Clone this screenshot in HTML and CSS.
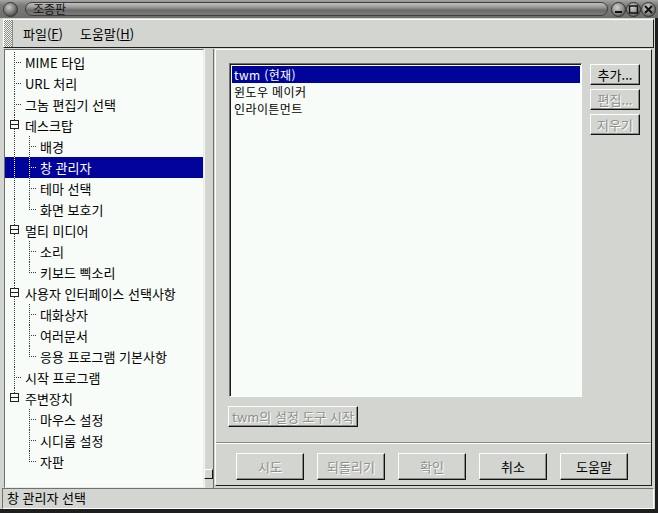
FILE: index.html
```html
<!DOCTYPE html>
<html lang="ko">
<head>
    <meta charset="UTF-8">
    <title>조종판</title>
    <link rel="stylesheet" href="styles.css">
</head>
<body>
    <div class="window">
        <div class="titlebar">
            <svg class="orb" width="15" height="15" viewBox="0 0 15 15">
                <defs>
                    <radialGradient id="orbFill" cx="0.4" cy="0.35" r="0.7">
                        <stop offset="0" stop-color="#c8c8c6"/>
                        <stop offset="0.6" stop-color="#7a7a78"/>
                        <stop offset="1" stop-color="#3c3c3a"/>
                    </radialGradient>
                </defs>
                <circle cx="7.5" cy="7.5" r="7" fill="url(#orbFill)" stroke="#3a3a3a" stroke-width="1"/>
            </svg>
            <div class="title-pill"><span class="title">조종판</span></div>
            <svg class="wm-buttons" width="45" height="15" viewBox="0 0 45 15">
                <defs>
                    <radialGradient id="btnFill" cx="0.4" cy="0.35" r="0.75">
                        <stop offset="0" stop-color="#d0d0ce"/>
                        <stop offset="0.6" stop-color="#8a8a88"/>
                        <stop offset="1" stop-color="#464644"/>
                    </radialGradient>
                </defs>
                <circle cx="7.5" cy="7.5" r="7" fill="url(#btnFill)" stroke="#333" stroke-width="1"/>
                <circle cx="22.5" cy="7.5" r="7" fill="url(#btnFill)" stroke="#333" stroke-width="1"/>
                <circle cx="37.5" cy="7.5" r="7" fill="url(#btnFill)" stroke="#333" stroke-width="1"/>
                <rect x="4" y="9" width="7" height="2" fill="#111"/>
                <rect x="18.5" y="4" width="8" height="7" fill="none" stroke="#111" stroke-width="1.5"/>
                <path d="M34 4 L41 11 M41 4 L34 11" stroke="#111" stroke-width="2"/>
            </svg>
        </div>

        <div class="frame">
            <div class="menubar">
                <span class="grip"></span>
                <span class="menu-item first">파일(<u>F</u>)</span>
                <span class="menu-item">도움말(<u>H</u>)</span>
            </div>

            <div class="main">
                <div class="tree">
                    <div class="row"><span class="c tee"></span><span class="label">MIME 타입</span></div>
                    <div class="row"><span class="c tee"></span><span class="label">URL 처리</span></div>
                    <div class="row"><span class="c tee"></span><span class="label">그놈 편집기 선택</span></div>
                    <div class="row"><span class="c exp pipe"><span class="box"></span></span><span class="label">데스크탑</span></div>
                    <div class="row"><span class="c pipe"></span><span class="c tee"></span><span class="label">배경</span></div>
                    <div class="row selected"><span class="c pipe"></span><span class="c tee"></span><span class="label">창 관리자</span></div>
                    <div class="row"><span class="c pipe"></span><span class="c tee"></span><span class="label">테마 선택</span></div>
                    <div class="row"><span class="c pipe"></span><span class="c ell"></span><span class="label">화면 보호기</span></div>
                    <div class="row"><span class="c exp pipe"><span class="box"></span></span><span class="label">멀티 미디어</span></div>
                    <div class="row"><span class="c pipe"></span><span class="c tee"></span><span class="label">소리</span></div>
                    <div class="row"><span class="c pipe"></span><span class="c ell"></span><span class="label">키보드 삑소리</span></div>
                    <div class="row"><span class="c exp pipe"><span class="box"></span></span><span class="label">사용자 인터페이스 선택사항</span></div>
                    <div class="row"><span class="c pipe"></span><span class="c tee"></span><span class="label">대화상자</span></div>
                    <div class="row"><span class="c pipe"></span><span class="c tee"></span><span class="label">여러문서</span></div>
                    <div class="row"><span class="c pipe"></span><span class="c ell"></span><span class="label">응용 프로그램 기본사항</span></div>
                    <div class="row"><span class="c tee"></span><span class="label">시작 프로그램</span></div>
                    <div class="row"><span class="c exp top"><span class="box"></span></span><span class="label">주변장치</span></div>
                    <div class="row"><span class="c"></span><span class="c tee"></span><span class="label">마우스 설정</span></div>
                    <div class="row"><span class="c"></span><span class="c tee"></span><span class="label">시디롬 설정</span></div>
                    <div class="row"><span class="c"></span><span class="c ell"></span><span class="label">자판</span></div>
                </div>
                <div class="vscroll"><span class="thumb"></span></div>

                <div class="capplet">
                    <div class="capplet-top">
                        <div class="listbox">
                            <div class="list-item selected">twm (현재)</div>
                            <div class="list-item">윈도우 메이커</div>
                            <div class="list-item">인라이튼먼트</div>
                        </div>
                        <div class="side-buttons">
                            <button class="btn">추가...</button>
                            <button class="btn disabled">편집...</button>
                            <button class="btn disabled">지우기</button>
                        </div>
                    </div>
                    <button class="btn disabled config">twm의 설정 도구 시작</button>
                    <div class="separator"></div>
                    <div class="actions">
                        <button class="btn action disabled">시도</button>
                        <button class="btn action disabled">되돌리기</button>
                        <button class="btn action disabled">확인</button>
                        <button class="btn action">취소</button>
                        <button class="btn action">도움말</button>
                    </div>
                </div>
            </div>

            <div class="statusbar">창 관리자 선택</div>
        </div>
    </div>
</body>
</html>
```

FILE: styles.css
```css
* {
    box-sizing: border-box;
}

body {
    margin: 0;
    font-family: "Noto Sans CJK KR", "Noto Sans", sans-serif;
    font-size: 13px;
    color: #000;
    background-color: #d3d6d0;
}

.window {
    width: 658px;
    height: 513px;
    display: flex;
    flex-direction: column;
    background-color: #d3d6d0;
    overflow: hidden;
}

/* window manager title bar */
.titlebar {
    height: 18px;
    flex: none;
    display: flex;
    align-items: center;
    padding: 0 2px 0 3px;
    background: linear-gradient(#a4a4a2, #7c7c7a 30%, #6e6e6c);
}

.orb {
    flex: none;
}

.title-pill {
    flex: 1;
    height: 14px;
    margin-left: 7px;
    border: 1px solid #3e3e3c;
    border-radius: 7px;
    display: flex;
    align-items: center;
    padding-left: 7px;
    background: linear-gradient(#c0c0be, #9a9a98 35%, #6a6a68 60%, #7c7c7a);
}

.title {
    font-size: 12px;
    line-height: 12px;
    color: #111;
}

.wm-buttons {
    flex: none;
    margin-left: 3px;
}

.frame {
    flex: 1;
    display: flex;
    flex-direction: column;
    border-right: 3px solid #1e1e1e;
    border-bottom: 4px solid #1e1e1e;
}

/* menu bar */
.menubar {
    height: 29px;
    flex: none;
    margin: 1px 1px 1px 3px;
    display: flex;
    align-items: center;
    border: 1px solid;
    border-color: #fff #1e1e1e #1e1e1e #fff;
}

.grip {
    width: 9px;
    height: 27px;
    border-right: 1px solid #8a8c88;
    background: repeating-conic-gradient(#8a8c88 0 25%, #f4f6f2 0 50%) 1px 1px / 2px 2px;
}

.menu-item {
    margin-left: 17px;
}

.menu-item.first {
    margin-left: 10px;
}

/* main area */
.main {
    height: 439px;
    flex: none;
    display: flex;
    padding-left: 4px;
}

.tree {
    width: 200px;
    flex: none;
    border: 1px solid;
    border-color: #6f716d #e8ebe6 #e8ebe6 #6f716d;
    background-color: #f8fcf8;
    padding-top: 2px;
    overflow: hidden;
    --line: #3a3a3a;
}

.row {
    height: 21px;
    display: flex;
    padding-left: 2px;
}

.row.selected {
    background-color: #00049a;
    color: #fff;
    --line: #fff;
}

.c {
    width: 15px;
    height: 21px;
    flex: none;
}

.pipe {
    background: repeating-linear-gradient(to bottom, var(--line) 0 1px, transparent 1px 2px) 7px 0 / 1px 100% no-repeat;
}

.tee {
    background:
        repeating-linear-gradient(to right, var(--line) 0 1px, transparent 1px 2px) 9px 10px / 6px 1px no-repeat,
        repeating-linear-gradient(to bottom, var(--line) 0 1px, transparent 1px 2px) 7px 0 / 1px 100% no-repeat;
}

.ell {
    background:
        repeating-linear-gradient(to right, var(--line) 0 1px, transparent 1px 2px) 9px 10px / 6px 1px no-repeat,
        repeating-linear-gradient(to bottom, var(--line) 0 1px, transparent 1px 2px) 7px 0 / 1px 11px no-repeat;
}

.top {
    background: repeating-linear-gradient(to bottom, var(--line) 0 1px, transparent 1px 2px) 7px 0 / 1px 6px no-repeat;
}

.exp {
    display: flex;
    padding: 5px 0 0 3px;
}

.box {
    width: 9px;
    height: 9px;
    border: 1px solid #222;
    background: linear-gradient(#222, #222) center / 100% 1px no-repeat, #f8fcf8;
}

.label {
    margin-left: 3px;
    line-height: 21px;
    white-space: nowrap;
}

.vscroll {
    width: 10px;
    flex: none;
    border-left: 1px solid #f4f6f2;
    border-right: 1px solid #6f716d;
    display: flex;
    flex-direction: column;
    justify-content: flex-end;
    padding-bottom: 9px;
}

.thumb {
    width: 9px;
    height: 10px;
    margin-left: -1px;
    border: 1px solid;
    border-color: #fff #111 #111 #fff;
    background-color: #d3d6d0;
}

/* window manager capplet */
.capplet {
    flex: 1;
    margin: 0 3px 2px 1px;
    border: 1px solid;
    border-color: #fff #1e1e1e #1e1e1e #fff;
    padding: 13px 11px 0 13px;
    display: flex;
    flex-direction: column;
    align-items: flex-start;
}

.capplet-top {
    display: flex;
    align-items: flex-start;
}

.listbox {
    width: 353px;
    height: 334px;
    border: 1px solid;
    border-color: #6f716d #fff #fff #6f716d;
    box-shadow: inset 1px 1px 0 #1e1e1e;
    background-color: #f8fcf8;
    padding: 2px 1px 0 2px;
}

.list-item {
    height: 17px;
    line-height: 17px;
    font-size: 12px;
    letter-spacing: 0.4px;
    padding-left: 2px;
    white-space: nowrap;
}

.list-item.selected {
    background-color: #00049a;
    color: #fff;
}

.side-buttons {
    width: 50px;
    margin: 1px 0 0 8px;
    display: flex;
    flex-direction: column;
    gap: 4px;
}

.btn {
    font-family: inherit;
    font-size: 13px;
    color: #000;
    background-color: #d3d6d0;
    border: 1px solid;
    border-color: #fff #111 #111 #fff;
    box-shadow: inset -1px -1px 0 #8a8c88;
    padding: 0;
    height: 21px;
    line-height: 18px;
    white-space: nowrap;
}

.btn.disabled {
    color: #8e908c;
    text-shadow: 1px 1px 0 #fff;
}

.side-buttons .btn {
    width: 50px;
}

.config {
    width: 130px;
    margin: 9px 0 0 -1px;
}

.separator {
    align-self: stretch;
    height: 2px;
    margin: 15px -11px 0 -13px;
    border-top: 1px solid #8a8c88;
    border-bottom: 1px solid #fff;
}

.actions {
    display: flex;
    gap: 13px;
    margin: 9px 0 0 7px;
}

.action {
    width: 68px;
    height: 27px;
    line-height: 24px;
}

.statusbar {
    height: 21px;
    flex: none;
    margin: 0 1px 0 2px;
    border: 1px solid;
    border-color: #6f716d #fff #fff #6f716d;
    padding-left: 4px;
    line-height: 18px;
    white-space: nowrap;
}
```
